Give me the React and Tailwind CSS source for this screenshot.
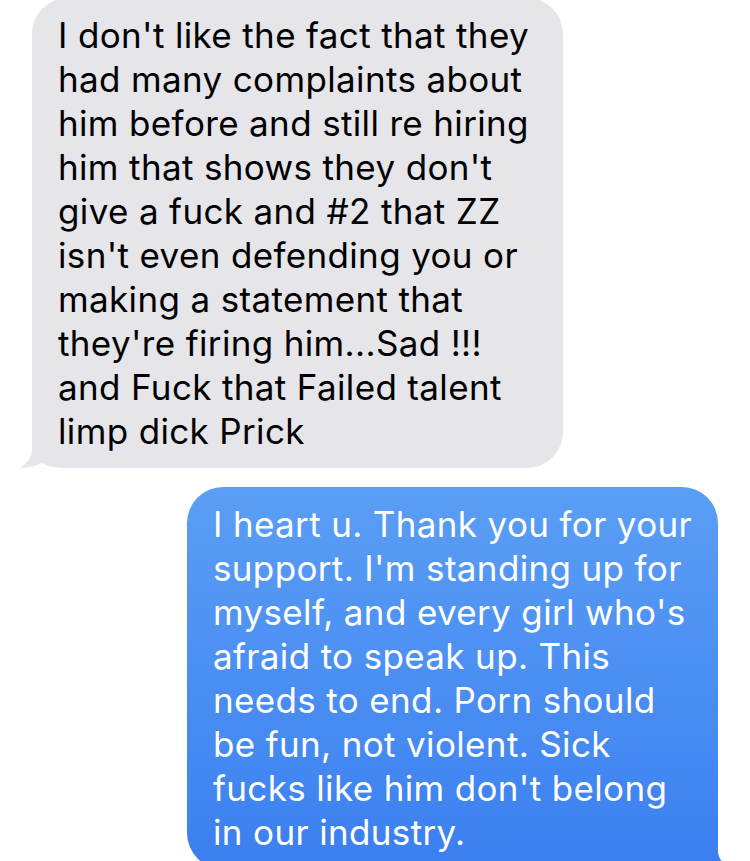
const INCOMING = [
  "I don't like the fact that they",
  "had many complaints about",
  "him before and still re hiring",
  "him that shows they don't",
  "give a fuck and #2 that ZZ",
  "isn't even defending you or",
  "making a statement that",
  "they're firing him...Sad !!!",
  "and Fuck that Failed talent",
  "limp dick Prick",
];

const OUTGOING = [
  "I heart u. Thank you for your",
  "support. I'm standing up for",
  "myself, and every girl who's",
  "afraid to speak up. This",
  "needs to end. Porn should",
  "be fun, not violent. Sick",
  "fucks like him don't belong",
  "in our industry.",
];

function Lines({ lines }) {
  return lines.map((l, i) => (
    <span key={i} className="block whitespace-nowrap">
      {l}
    </span>
  ));
}

export default function App() {
  return (
    <div
      className="h-[861px] w-[750px] overflow-hidden bg-white"
      style={{ fontFamily: "Inter, 'Noto Sans', sans-serif" }}
    >
      <div className="flex flex-col gap-[19px]">
        {/* received */}
        <div className="relative ml-[32px] mt-[-2px] w-[531px]">
          <div className="relative z-10 rounded-[36px] bg-[#e5e5ea] px-[26px] py-[15px] text-[35px] leading-[44px] tracking-[0.01em] text-black">
            <Lines lines={INCOMING} />
          </div>
          <svg
            className="absolute bottom-0 left-[-12px] z-0"
            width="50"
            height="40"
            viewBox="0 0 50 40"
          >
            <path
              d="M12 0 L12 22 C12 30 6 36 0 39.5 C8 40.5 16 38 22 35 C28 39 36 40 50 40 L50 0 Z"
              fill="#e5e5ea"
            />
          </svg>
        </div>

        {/* sent */}
        <div className="relative ml-[187px] w-[531px]">
          <div className="relative z-10 rounded-[36px] bg-gradient-to-b from-[#5b9ef5] to-[#3b7ff0] px-[26px] py-[15px] text-[35px] leading-[44px] tracking-[0.01em] text-white">
            <Lines lines={OUTGOING} />
          </div>
          <svg
            className="absolute bottom-0 right-[-12px] z-0"
            width="50"
            height="40"
            viewBox="0 0 50 40"
          >
            <path
              d="M38 0 L38 22 C38 30 44 36 50 39.5 C42 40.5 34 38 28 35 C22 39 14 40 0 40 L0 0 Z"
              fill="#3b7ff0"
            />
          </svg>
        </div>
      </div>
    </div>
  );
}
